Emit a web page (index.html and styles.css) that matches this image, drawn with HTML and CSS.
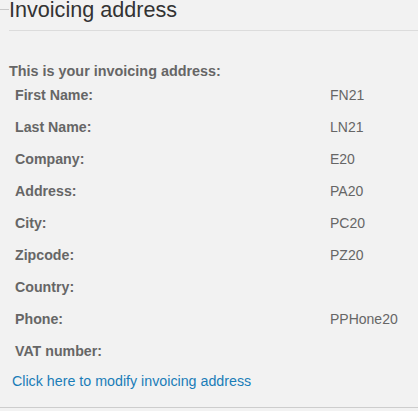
FILE: index.html
```html
<!DOCTYPE html>
<html lang="en">

<head>
    <meta charset="UTF-8" />
    <meta name="viewport" content="width=device-width, initial-scale=1.0" />
    <title>Invoicing address</title>
    <link rel="stylesheet" href="styles.css">
</head>

<body>

    <div class="box">
        <div class="box-head">
            <h2 class="box-title">Invoicing address</h2>
        </div>

        <div class="box-body">
            <p class="intro">This is your invoicing address:</p>

            <div class="address">
                <div class="label">First Name:</div>
                <div class="value">FN21</div>

                <div class="label">Last Name:</div>
                <div class="value">LN21</div>

                <div class="label">Company:</div>
                <div class="value">E20</div>

                <div class="label">Address:</div>
                <div class="value">PA20</div>

                <div class="label">City:</div>
                <div class="value">PC20</div>

                <div class="label">Zipcode:</div>
                <div class="value">PZ20</div>

                <div class="label">Country:</div>
                <div class="value"></div>

                <div class="label">Phone:</div>
                <div class="value">PPHone20</div>

                <div class="label">VAT number:</div>
                <div class="value"></div>
            </div>

            <a class="modify-link" href="#">Click here to modify invoicing address</a>
        </div>
    </div>

</body>

</html>
```

FILE: styles.css
```css
* {
    box-sizing: border-box;
}

body {
    font-family: "Liberation Sans", Arial, sans-serif;
    margin: 0;
    background-color: #f2f2f2;
    color: #666;
}

.box {
    border-bottom: 1px solid #cdcdcd;
}

.box-head {
    display: flex;
    align-items: flex-start;
}

/* short piece of the top rule left of the title */
.box-head::before {
    content: "";
    width: 9px;
    margin-top: 9px;
    border-top: 1px solid #c8c8c8;
}

.box-title {
    flex: 1;
    margin: 0;
    padding: 0 0 10px 0;
    font-size: 21.6px;
    font-weight: normal;
    line-height: 20px;
    color: #333;
    border-bottom: 1px solid #dcdcdc;
}

.box-body {
    padding: 32px 0 17px 9px;
}

.intro {
    margin: 0;
    font-size: 14.4px;
    font-weight: bold;
    line-height: 16px;
}

.address {
    display: grid;
    grid-template-columns: 315px 1fr;
    padding-left: 6px;
    font-size: 14px;
    line-height: 16px;
}

.label,
.value {
    padding: 8px 0;
    min-height: 32px;
}

.label {
    font-weight: bold;
    font-size: 14.2px;
}

.modify-link {
    display: inline-block;
    margin: 6px 0 0 3px;
    font-size: 14.25px;
    line-height: 16px;
    color: #1a7db8;
    text-decoration: none;
}
```
